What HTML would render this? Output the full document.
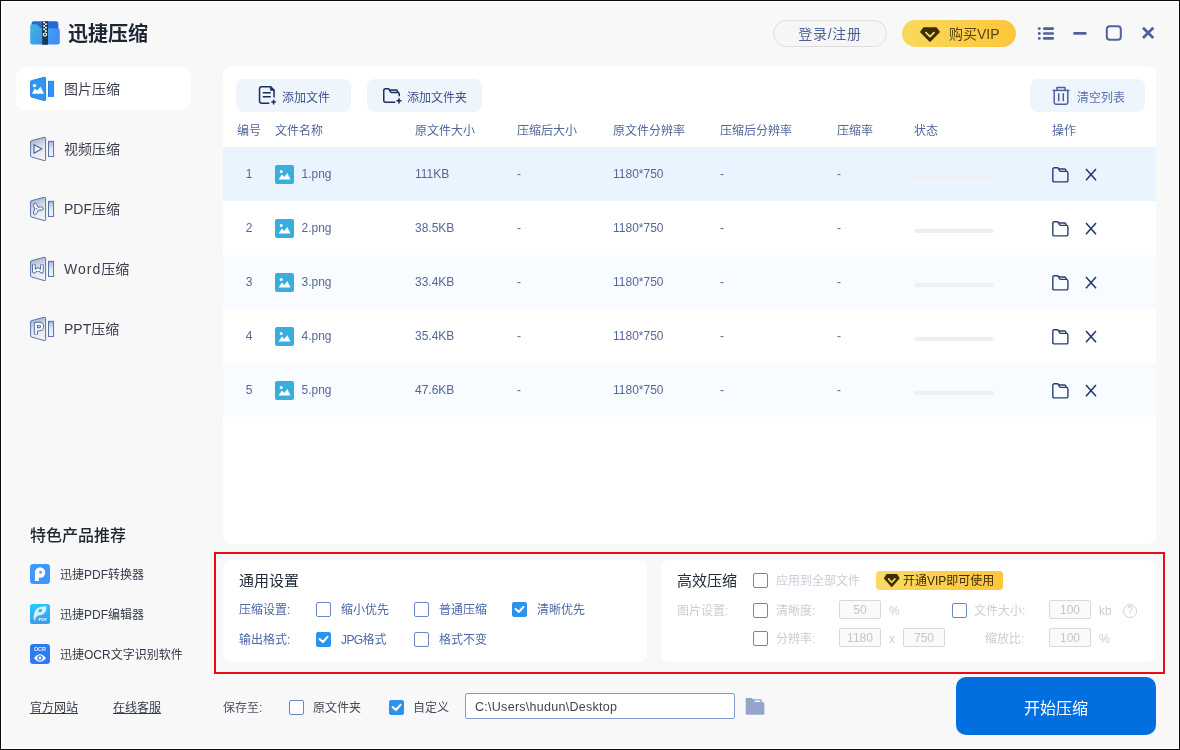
<!DOCTYPE html>
<html lang="zh-CN">
<head>
<meta charset="utf-8">
<title>迅捷压缩</title>
<style>
*{box-sizing:border-box;margin:0;padding:0}
html,body{width:1180px;height:750px;overflow:hidden}
body{position:relative;background:#f8f8f8;font-family:"Liberation Sans","Noto Sans CJK SC",sans-serif;color:#4a5a8c;font-size:12px}
#app{position:absolute;left:0;top:0;width:1180px;height:750px;will-change:transform}
.abs{position:absolute}
.t{position:absolute;white-space:nowrap;line-height:1}
#frame{position:absolute;left:0;top:0;width:1180px;height:750px;border:1px solid #0a0a0a;box-shadow:inset 0 0 0 1px #fff;pointer-events:none;z-index:50}
/* title */
#title{left:68px;top:24px;font-size:20px;font-weight:bold;color:#1d2433;letter-spacing:0}
/* sidebar */
.side-active{left:16px;top:67px;width:175px;height:43px;background:#fff;border-radius:9px}
.side-t{left:64px;font-size:14px;color:#3a3f4d}
/* main panel */
#panel{left:223px;top:66px;width:933px;height:478px;background:#fff;border-radius:8px}
.btn{position:absolute;height:33px;background:#eef5fd;border-radius:8px}
.btn .t{font-size:12px;color:#3d4f86}
.th{font-size:12px;color:#54679b;top:125px}
.row{position:absolute;left:223px;width:933px;height:54px}
.td{font-size:12px;color:#566898}
.bar{position:absolute;left:914px;width:80px;height:4px;border-radius:2px;background:#efefef}
/* settings */
#red{left:214px;top:552px;width:951px;height:122px;border:2px solid #e50c18}
.card{position:absolute;background:#fff;border-radius:8px}
.cb{position:absolute;width:15px;height:15px;border:1px solid #6b86c4;border-radius:2px;background:#fff}
.cb.on{background:#2c93ec;border-color:#2c93ec}
.lab{font-size:12px;color:#4c66a8}
.dis{font-size:12px;color:#c9cdd6}
.inp{position:absolute;height:19px;border:1px solid #d8d9dd;border-radius:2px;background:#fafafa;color:#c3c6cd;font-size:12px;text-align:center;line-height:18px}
.prod{font-size:12px;color:#333a48}
.link{font-size:12px;color:#333a48;text-decoration:underline}
</style>
</head>
<body>
<div id="app">
<!-- title bar -->
<!-- logo -->
<svg class="abs" style="left:30px;top:21px" width="30" height="24" viewBox="0 0 30 24">
  <defs>
    <linearGradient id="lgL" x1="0" y1="0" x2="1" y2="1"><stop offset="0" stop-color="#3cb9dc"/><stop offset="1" stop-color="#3f8ff0"/></linearGradient>
    <linearGradient id="lgR" x1="0" y1="0" x2="1" y2="1"><stop offset="0" stop-color="#3fa4ec"/><stop offset="1" stop-color="#4583fb"/></linearGradient>
  </defs>
  <path d="M1.5,3 Q1.5,0.3 4,0.3 H26 Q28.4,0.3 28.4,3 V12 H1.5 Z" fill="#2967d4"/>
  <path d="M0.2,5 Q0.2,3.2 2,3.2 H6 Q7,3.2 7.8,4 L10,6.4 Q10.8,7.2 12,7.2 H12.2 V23.6 H2.6 Q0.2,23.6 0.2,21.2 Z" fill="url(#lgL)"/>
  <path d="M17.8,7.2 H27.6 Q29.8,7.2 29.8,9.4 V21.2 Q29.8,23.6 27.4,23.6 H17.8 Z" fill="url(#lgR)"/>
  <rect x="12.1" y="0.3" width="5.9" height="23.5" fill="#173a4e"/>
  <g fill="#fff">
    <rect x="13.2" y="0.6" width="1.8" height="1.7"/><rect x="15" y="2.3" width="1.8" height="1.7"/>
    <rect x="13.2" y="4" width="1.8" height="1.7"/><rect x="15" y="5.7" width="1.8" height="1.7"/>
    <rect x="13.2" y="7.4" width="1.8" height="1.7"/><rect x="15" y="9.1" width="1.8" height="1.7"/>
  </g>
  <circle cx="15" cy="13.6" r="1.6" fill="none" stroke="#fff" stroke-width="1.1"/>
</svg>
<div class="t" id="title">迅捷压缩</div>

<!-- login / vip -->
<div class="abs" style="left:773px;top:20px;width:114px;height:27px;border:1px solid #dcdde0;border-radius:14px;background:#f6f6f7"></div>
<div class="t" style="left:773px;width:114px;text-align:center;top:27px;font-size:14px;letter-spacing:0.7px;color:#4f6096">登录/注册</div>
<div class="abs" style="left:902px;top:20px;width:114px;height:27px;border-radius:14px;background:linear-gradient(100deg,#f8d95e 0%,#fdc53a 100%)"></div>
<svg class="abs" style="left:919px;top:26px" width="22" height="17" viewBox="0 0 22 17">
  <path d="M5,1.2 H17 Q17.6,1.2 18,1.7 L20.7,5.6 Q21,6.1 20.6,6.6 L11.7,15.6 Q11,16.2 10.3,15.6 L1.4,6.6 Q1,6.1 1.3,5.6 L4,1.7 Q4.4,1.2 5,1.2 Z" fill="#3d2c08"/>
  <path d="M7,6.6 L11,10.6 L15,6.6" fill="none" stroke="#f9d256" stroke-width="1.9" stroke-linecap="round" stroke-linejoin="round"/>
</svg>
<div class="t" style="left:949px;top:27px;font-size:14px;color:#5a4310">购买VIP</div>

<!-- window controls -->
<svg class="abs" style="left:1034px;top:22px" width="126" height="22" viewBox="0 0 126 22" fill="none" stroke="#4d6399" stroke-linecap="round">
  <g stroke-width="2.6">
    <line x1="10.2" y1="6.6" x2="18.8" y2="6.6"/><line x1="10.2" y1="11.5" x2="18.8" y2="11.5"/><line x1="10.2" y1="16.4" x2="18.8" y2="16.4"/>
    <line x1="40.4" y1="11.4" x2="51.4" y2="11.4"/>
  </g>
  <g fill="#4d6399" stroke="none"><circle cx="5.3" cy="6.6" r="1.45"/><circle cx="5.3" cy="11.5" r="1.45"/><circle cx="5.3" cy="16.4" r="1.45"/></g>
  <rect x="72.8" y="4.2" width="14" height="13.6" rx="3" stroke-width="2"/>
  <g stroke-width="2.8" stroke-linecap="butt"><line x1="109" y1="5.7" x2="119.3" y2="16"/><line x1="119.3" y1="5.7" x2="109" y2="16"/></g>
</svg>

<!-- sidebar -->
<div class="abs side-active"></div>
<svg width="0" height="0" style="position:absolute">
  <defs>
    <linearGradient id="gTrap" x1="0" y1="0" x2="0.25" y2="1"><stop offset="0" stop-color="#94a6c8"/><stop offset="0.55" stop-color="#dfe3ec"/><stop offset="1" stop-color="#f1f2f6"/></linearGradient>
    <linearGradient id="gBar" x1="0" y1="0" x2="0" y2="1"><stop offset="0" stop-color="#a4b3d0"/><stop offset="0.5" stop-color="#e3e7ef"/><stop offset="1" stop-color="#f3f4f7"/></linearGradient>
    <g id="sideBase">
      <path d="M10.6,11.6 Q10.6,10.9 11.3,10.7 L24.2,7.3 Q25.6,7 25.6,8.4 V29.6 Q25.6,31 24.2,30.6 L11.3,26.9 Q10.6,26.7 10.6,26 Z" fill="url(#gTrap)" stroke="#4a66a0" stroke-width="0.9" stroke-linejoin="round"/>
      <rect x="28.5" y="11.3" width="5.1" height="15.1" fill="url(#gBar)" stroke="#4a66a0" stroke-width="0.9"/>
    </g>
  </defs>
</svg>
<!-- image (active) -->
<svg class="abs" style="left:20px;top:70px" width="50" height="40" viewBox="0 0 50 40">
  <path d="M10.6,11.6 Q10.6,10.9 11.3,10.7 L24.2,7.3 Q25.6,7 25.6,8.4 V29.6 Q25.6,31 24.2,30.6 L11.3,26.9 Q10.6,26.7 10.6,26 Z" fill="#2f96f0" stroke="#1f78e4" stroke-width="0.9" stroke-linejoin="round"/>
  <rect x="28.5" y="11.3" width="5.1" height="15.1" fill="#2f96f0" stroke="#1f78e4" stroke-width="0.9"/>
  <circle cx="14.5" cy="15.6" r="1.7" fill="#fff"/>
  <path d="M12,23.8 L14.8,18.6 L17.1,20.6 L20.5,16.7 L24,23.8 Z" fill="#fff"/>
</svg>
<!-- video -->
<svg class="abs" style="left:20px;top:130px" width="50" height="40" viewBox="0 0 50 40">
  <use href="#sideBase"/>
  <path d="M14,14.7 L21.9,18.8 L14,23.2 Z" fill="#f3f5f9" stroke="#4a66a0" stroke-width="1.2" stroke-linejoin="round"/>
</svg>
<!-- pdf -->
<svg class="abs" style="left:20px;top:190px" width="50" height="40" viewBox="0 0 50 40">
  <use href="#sideBase"/>
  <path d="M13.5,14.6 Q13.5,13 15.2,13.2 Q17,13.8 18.2,17.2 Q20.6,16.6 22.4,17.2 Q23.9,17.9 23.3,19.3 Q22.6,20.4 18.3,20.2 Q17.4,22.9 15.7,24.4 Q14.2,25.3 13.5,24 Q13.1,22.4 14.7,18.8 Q13.5,16.2 13.5,14.6 Z" fill="#f1f3f8" stroke="#4a66a0" stroke-width="1" stroke-linejoin="round"/>
  <circle cx="16.4" cy="18.7" r="0.7" fill="#4a66a0"/>
</svg>
<!-- word -->
<svg class="abs" style="left:20px;top:250px" width="50" height="40" viewBox="0 0 50 40">
  <use href="#sideBase"/>
  <g fill="none" stroke-linejoin="round" stroke-linecap="butt">
    <path d="M13.9,14.4 V21.8 L17.9,19 L21.9,21.8 V14.4" stroke="#4a66a0" stroke-width="3.6"/>
    <path d="M13.9,14.9 V21.8 L17.9,19 L21.9,21.8 V14.9" stroke="#f6f8fb" stroke-width="1.8"/>
  </g>
</svg>
<!-- ppt -->
<svg class="abs" style="left:20px;top:310px" width="50" height="40" viewBox="0 0 50 40">
  <use href="#sideBase"/>
  <g fill="none" stroke-linejoin="round" stroke-linecap="butt">
    <path d="M15.9,24.4 V13.8 H19.4 A2.75,2.75 0 0 1 19.4,19.3 H15.9" stroke="#4a66a0" stroke-width="4"/>
    <path d="M15.9,23.9 V13.8 H19.4 A2.75,2.75 0 0 1 19.4,19.3 H15.9" stroke="#f6f8fb" stroke-width="2.2"/>
  </g>
</svg>
<div class="t side-t" style="top:82px">图片压缩</div>
<div class="t side-t" style="top:142px">视频压缩</div>
<div class="t side-t" style="top:202px">PDF压缩</div>
<div class="t side-t" style="top:262px"><span style="letter-spacing:1px">Word</span>压缩</div>
<div class="t side-t" style="top:322px">PPT压缩</div>

<!-- main panel -->
<div class="abs" id="panel"></div>
<svg width="0" height="0" style="position:absolute"><defs>
  <g id="icoFile">
    <rect x="0" y="0" width="19" height="19" rx="2" fill="#39addc"/>
    <circle cx="6.2" cy="6.6" r="1.5" fill="#fff"/>
    <path d="M3.6,14.6 L6.9,9.6 L9.3,12.1 L12.3,7.9 L15.5,14.6 Z" fill="#fff"/>
  </g>
  <g id="icoOpen" fill="none" stroke="#2b3e70" stroke-width="1.4" stroke-linejoin="round" stroke-linecap="round">
    <path d="M0.8,2.3 Q0.8,0.8 2.3,0.8 H5.3 Q6.1,0.8 6.5,1.6 L7.4,3.5 Q7.8,4.4 8.9,4.4 H14.4 Q15.9,4.4 15.9,5.9 V13.4 Q15.9,14.9 14.4,14.9 H2.3 Q0.8,14.9 0.8,13.4 Z"/>
    <path d="M6.9,2 H12.6 Q13.6,2 13.9,3 L14.3,4.3"/>
  </g>
  <g id="icoX" fill="none" stroke="#22366a" stroke-width="1.5" stroke-linecap="butt">
    <path d="M1,0.9 L11,12.2 M11,0.9 L1,12.2"/>
  </g>
</defs></svg>

<!-- toolbar -->
<div class="btn" style="left:236px;top:79px;width:115px"></div>
<svg class="abs" style="left:258px;top:85px" width="20" height="21" viewBox="0 0 20 21" fill="none" stroke="#1c2f5e" stroke-width="1.5" stroke-linecap="round" stroke-linejoin="round">
  <path d="M10.8,18.15 H3.6 Q1.55,18.15 1.55,16.1 V3.7 Q1.55,1.65 3.6,1.65 H12.4 L16.05,5.3 V12.1"/>
  <path d="M12.4,1.65 V5.3 H16.05 Z" fill="#1c2f5e" stroke-width="0.8"/>
  <path d="M5.3,7.7 H12.3 M5.3,11.7 H12.3" stroke-width="1.4"/>
  <path d="M13.3,17.1 H17.9 M15.6,14.8 V19.4" stroke-width="1.5" stroke-linecap="butt"/>
</svg>
<div class="t" style="left:282px;top:92px;font-size:12px;color:#3f5288">添加文件</div>

<div class="btn" style="left:367px;top:79px;width:115px"></div>
<svg class="abs" style="left:382px;top:86px" width="21" height="19" viewBox="0 0 21 19" fill="none" stroke="#1c2f5e" stroke-width="1.5" stroke-linecap="round" stroke-linejoin="round">
  <path d="M12.6,16.25 H3.7 Q1.75,16.25 1.75,14.3 V4.7 Q1.75,2.75 3.7,2.75 H6 Q6.9,2.75 7.3,3.6 L8.2,5.5 Q8.6,6.4 9.6,6.4 H15.6 Q17.25,6.4 17.25,8 V9.8"/>
  <path d="M7.8,3.9 H14 Q15,3.9 15.4,4.9 L15.9,6.3" fill="#9aa6c2" fill-opacity="0.6"/>
  <path d="M14.4,14.8 H19.6 M17,12.2 V17.4" stroke-width="1.6" stroke-linecap="butt"/>
</svg>
<div class="t" style="left:407px;top:92px;font-size:12px;color:#3f5288">添加文件夹</div>

<div class="btn" style="left:1030px;top:79px;width:115px"></div>
<svg class="abs" style="left:1051px;top:85px" width="20" height="21" viewBox="0 0 20 21" fill="none" stroke="#4d6297" stroke-width="1.5" stroke-linecap="butt" stroke-linejoin="round">
  <path d="M1.6,5.4 H18.4"/>
  <path d="M6,5 V2.6 H14 V5"/>
  <path d="M3.2,5.4 V17.6 Q3.2,19.3 4.9,19.3 H15.1 Q16.8,19.3 16.8,17.6 V5.4"/>
  <path d="M7.7,8.2 V16.2 M12.3,8.2 V16.2"/>
</svg>
<div class="t" style="left:1077px;top:92px;font-size:12px;color:#5770a8">清空列表</div>

<!-- header -->
<div class="t th" style="left:237px">编号</div>
<div class="t th" style="left:275px">文件名称</div>
<div class="t th" style="left:415px">原文件大小</div>
<div class="t th" style="left:517px">压缩后大小</div>
<div class="t th" style="left:613px">原文件分辨率</div>
<div class="t th" style="left:720px">压缩后分辨率</div>
<div class="t th" style="left:837px">压缩率</div>
<div class="t th" style="left:914px">状态</div>
<div class="t th" style="left:1052px">操作</div>

<!-- rows -->
<div class="row" style="top:147px;background:#eaf4ff"></div>
<div class="t td" style="left:237px;width:24px;text-align:center;top:168px">1</div>
<svg class="abs" style="left:275px;top:165px" width="19" height="19" viewBox="0 0 19 19"><use href="#icoFile"/></svg>
<div class="t td" style="left:301.5px;top:168px">1.png</div>
<div class="t td" style="left:415px;top:168px">111KB</div>
<div class="t td" style="left:517px;top:168px">-</div>
<div class="t td" style="left:613px;top:168px">1180*750</div>
<div class="t td" style="left:720px;top:168px">-</div>
<div class="t td" style="left:837px;top:168px">-</div>
<div class="bar" style="top:175px"></div>
<svg class="abs" style="left:1052px;top:167px" width="17" height="16" viewBox="0 0 17 16"><use href="#icoOpen"/></svg>
<svg class="abs" style="left:1085px;top:168px" width="12" height="13" viewBox="0 0 12 13"><use href="#icoX"/></svg>
<div class="row" style="top:201px;background:#ffffff"></div>
<div class="t td" style="left:237px;width:24px;text-align:center;top:222px">2</div>
<svg class="abs" style="left:275px;top:219px" width="19" height="19" viewBox="0 0 19 19"><use href="#icoFile"/></svg>
<div class="t td" style="left:301.5px;top:222px">2.png</div>
<div class="t td" style="left:415px;top:222px">38.5KB</div>
<div class="t td" style="left:517px;top:222px">-</div>
<div class="t td" style="left:613px;top:222px">1180*750</div>
<div class="t td" style="left:720px;top:222px">-</div>
<div class="t td" style="left:837px;top:222px">-</div>
<div class="bar" style="top:229px"></div>
<svg class="abs" style="left:1052px;top:221px" width="17" height="16" viewBox="0 0 17 16"><use href="#icoOpen"/></svg>
<svg class="abs" style="left:1085px;top:222px" width="12" height="13" viewBox="0 0 12 13"><use href="#icoX"/></svg>
<div class="row" style="top:255px;background:#f8fbff"></div>
<div class="t td" style="left:237px;width:24px;text-align:center;top:276px">3</div>
<svg class="abs" style="left:275px;top:273px" width="19" height="19" viewBox="0 0 19 19"><use href="#icoFile"/></svg>
<div class="t td" style="left:301.5px;top:276px">3.png</div>
<div class="t td" style="left:415px;top:276px">33.4KB</div>
<div class="t td" style="left:517px;top:276px">-</div>
<div class="t td" style="left:613px;top:276px">1180*750</div>
<div class="t td" style="left:720px;top:276px">-</div>
<div class="t td" style="left:837px;top:276px">-</div>
<div class="bar" style="top:283px"></div>
<svg class="abs" style="left:1052px;top:275px" width="17" height="16" viewBox="0 0 17 16"><use href="#icoOpen"/></svg>
<svg class="abs" style="left:1085px;top:276px" width="12" height="13" viewBox="0 0 12 13"><use href="#icoX"/></svg>
<div class="row" style="top:309px;background:#ffffff"></div>
<div class="t td" style="left:237px;width:24px;text-align:center;top:330px">4</div>
<svg class="abs" style="left:275px;top:327px" width="19" height="19" viewBox="0 0 19 19"><use href="#icoFile"/></svg>
<div class="t td" style="left:301.5px;top:330px">4.png</div>
<div class="t td" style="left:415px;top:330px">35.4KB</div>
<div class="t td" style="left:517px;top:330px">-</div>
<div class="t td" style="left:613px;top:330px">1180*750</div>
<div class="t td" style="left:720px;top:330px">-</div>
<div class="t td" style="left:837px;top:330px">-</div>
<div class="bar" style="top:337px"></div>
<svg class="abs" style="left:1052px;top:329px" width="17" height="16" viewBox="0 0 17 16"><use href="#icoOpen"/></svg>
<svg class="abs" style="left:1085px;top:330px" width="12" height="13" viewBox="0 0 12 13"><use href="#icoX"/></svg>
<div class="row" style="top:363px;background:#f8fbff"></div>
<div class="t td" style="left:237px;width:24px;text-align:center;top:384px">5</div>
<svg class="abs" style="left:275px;top:381px" width="19" height="19" viewBox="0 0 19 19"><use href="#icoFile"/></svg>
<div class="t td" style="left:301.5px;top:384px">5.png</div>
<div class="t td" style="left:415px;top:384px">47.6KB</div>
<div class="t td" style="left:517px;top:384px">-</div>
<div class="t td" style="left:613px;top:384px">1180*750</div>
<div class="t td" style="left:720px;top:384px">-</div>
<div class="t td" style="left:837px;top:384px">-</div>
<div class="bar" style="top:391px"></div>
<svg class="abs" style="left:1052px;top:383px" width="17" height="16" viewBox="0 0 17 16"><use href="#icoOpen"/></svg>
<svg class="abs" style="left:1085px;top:384px" width="12" height="13" viewBox="0 0 12 13"><use href="#icoX"/></svg>

<!-- settings -->
<div class="abs" id="red"></div>
<div class="card" style="left:223px;top:560px;width:424px;height:102px"></div>
<div class="card" style="left:661px;top:560px;width:495px;height:102px"></div>

<div class="t" style="left:239px;top:573px;font-size:15px;color:#232b3b">通用设置</div>
<div class="t lab" style="left:239px;top:604px">压缩设置:</div>
<div class="t lab" style="left:239px;top:634px">输出格式:</div>
<div class="cb" style="left:316px;top:602px"></div>
<div class="t lab" style="left:341px;top:604px">缩小优先</div>
<div class="cb" style="left:414px;top:602px"></div>
<div class="t lab" style="left:439px;top:604px">普通压缩</div>
<div class="cb on" style="left:512px;top:602px"><svg width="13" height="13" viewBox="0 0 13 13" style="position:absolute;left:0;top:0"><path d="M2.6,6 L5.9,9 L10.5,3.8" fill="none" stroke="#fff" stroke-width="2" stroke-linecap="round" stroke-linejoin="round"/></svg></div>
<div class="t lab" style="left:537px;top:604px">清晰优先</div>
<div class="cb on" style="left:316px;top:632px"><svg width="13" height="13" viewBox="0 0 13 13" style="position:absolute;left:0;top:0"><path d="M2.6,6 L5.9,9 L10.5,3.8" fill="none" stroke="#fff" stroke-width="2" stroke-linecap="round" stroke-linejoin="round"/></svg></div>
<div class="t lab" style="left:341px;top:634px"><span style="letter-spacing:-0.6px">JPG</span>格式</div>
<div class="cb" style="left:414px;top:632px"></div>
<div class="t lab" style="left:439px;top:634px">格式不变</div>

<div class="t" style="left:677px;top:573px;font-size:15px;color:#232b3b">高效压缩</div>
<div class="cb" style="left:753px;top:573px"></div>
<div class="t dis" style="left:776px;top:575px">应用到全部文件</div>
<div class="abs" style="left:876px;top:571px;width:127px;height:19px;border-radius:4px;background:linear-gradient(90deg,#f9da64 0%,#fdc53c 100%)"></div>
<svg class="abs" style="left:883px;top:573px" width="17.5" height="15" viewBox="0 0 22 17" preserveAspectRatio="none">
  <path d="M5,1.2 H17 Q17.6,1.2 18,1.7 L20.7,5.6 Q21,6.1 20.6,6.6 L11.7,15.6 Q11,16.2 10.3,15.6 L1.4,6.6 Q1,6.1 1.3,5.6 L4,1.7 Q4.4,1.2 5,1.2 Z" fill="#3d2c08"/>
  <path d="M7,6.6 L11,10.6 L15,6.6" fill="none" stroke="#f9d256" stroke-width="2" stroke-linecap="round" stroke-linejoin="round"/>
</svg>
<div class="t" style="left:903px;top:575px;font-size:12px;color:#3a2c0c">开通VIP即可使用</div>

<div class="t dis" style="left:677px;top:605px">图片设置:</div>
<div class="cb" style="left:753px;top:603px"></div>
<div class="t dis" style="left:776px;top:605px">清晰度:</div>
<div class="inp" style="left:839px;top:600px;width:42px">50</div><div class="t dis" style="left:889px;top:605px">%</div>
<div class="cb" style="left:952px;top:603px"></div>
<div class="t dis" style="left:974px;top:605px">文件大小:</div>
<div class="inp" style="left:1049px;top:600px;width:42px">100</div><div class="t dis" style="left:1099px;top:605px">kb</div>
<div class="abs" style="left:1123px;top:603.5px;width:14px;height:14px;border:1px solid #cfd2d9;border-radius:50%"></div><div class="t" style="left:1123px;width:14px;text-align:center;top:605.5px;font-size:10px;color:#c5c9d2">?</div>
<div class="cb" style="left:753px;top:631px"></div>
<div class="t dis" style="left:776px;top:633px">分辨率:</div>
<div class="inp" style="left:839px;top:628px;width:42px">1180</div><div class="t dis" style="left:889px;top:633px">x</div>
<div class="inp" style="left:903px;top:628px;width:42px">750</div>
<div class="t dis" style="left:985px;top:633px">缩放比:</div>
<div class="inp" style="left:1049px;top:628px;width:42px">100</div><div class="t dis" style="left:1099px;top:633px">%</div>

<!-- bottom -->
<div class="t" style="left:30px;top:528px;font-size:16px;font-weight:500;color:#1f2633">特色产品推荐</div>
<svg class="abs" style="left:30px;top:564px" width="20" height="20" viewBox="0 0 20 20">
  <defs><linearGradient id="gp1" x1="0" y1="0" x2="1" y2="1"><stop offset="0" stop-color="#3e9cff"/><stop offset="1" stop-color="#3a96fc"/></linearGradient></defs>
  <rect width="20" height="20" rx="3.2" fill="url(#gp1)"/>
  <circle cx="10.1" cy="8.5" r="5.2" fill="#fff"/>
  <path d="M4.9,8.5 H8.9 V16.4 Q8.9,17 8.3,17 H5.5 Q4.9,17 4.9,16.4 Z" fill="#fff"/>
  <circle cx="10.5" cy="8.3" r="1.35" fill="#3d9bff"/>
</svg>
<div class="t prod" style="left:60px;top:569px">迅捷PDF转换器</div>
<svg class="abs" style="left:30px;top:604px" width="20" height="20" viewBox="0 0 20 20">
  <defs><linearGradient id="gp2" x1="0" y1="0" x2="0.2" y2="1"><stop offset="0" stop-color="#24ccfe"/><stop offset="1" stop-color="#3a9df4"/></linearGradient></defs>
  <rect width="20" height="20" rx="2.6" fill="url(#gp2)"/>
  <path d="M4.3,17.3 Q2.6,11.4 5.4,6.4 Q8,2.2 16.2,2.2 Q17,6.4 14,9.6 Q11.6,11.8 8,11.6 Q6.2,13 5.6,14.2 Z" fill="#fff" fill-opacity="0.82"/>
  <ellipse cx="10.2" cy="6.6" rx="2.1" ry="1.5" transform="rotate(-25 10.2 6.6)" fill="#2fb4ee"/>
  <text x="12.9" y="16.7" font-family="Liberation Sans, sans-serif" font-size="4.4" font-weight="bold" fill="#fff" fill-opacity="0.92" text-anchor="middle">PDF</text>
</svg>
<div class="t prod" style="left:60px;top:609px">迅捷PDF编辑器</div>
<svg class="abs" style="left:30px;top:644px" width="20" height="20" viewBox="0 0 20 20">
  <rect width="20" height="20" rx="3.2" fill="#2b7cf0"/>
  <text x="9.9" y="6.9" font-family="Liberation Sans, sans-serif" font-size="5.2" font-weight="bold" fill="#eaf2ff" text-anchor="middle" textLength="12" lengthAdjust="spacingAndGlyphs">OCR</text>
  <path d="M4,14 Q10,6.4 16,14 Q10,21.6 4,14 Z" fill="#fff"/>
  <circle cx="10" cy="13.9" r="2.7" fill="#3f88f2"/>
  <circle cx="10" cy="13.9" r="1.3" fill="#fff"/>
</svg>
<div class="t prod" style="left:60px;top:649px">迅捷OCR文字识别软件</div>

<div class="t link" style="left:30px;top:702px">官方网站</div>
<div class="t link" style="left:113px;top:702px">在线客服</div>

<div class="t" style="left:223px;top:701.6px;font-size:12px;color:#4e5563">保存至:</div>
<div class="cb" style="left:289px;top:699.5px"></div>
<div class="t" style="left:313px;top:701.6px;font-size:12px;color:#434a58">原文件夹</div>
<div class="cb on" style="left:389px;top:699.5px"><svg width="13" height="13" viewBox="0 0 13 13" style="position:absolute;left:0;top:0"><path d="M2.6,6 L5.9,9 L10.5,3.8" fill="none" stroke="#fff" stroke-width="2" stroke-linecap="round" stroke-linejoin="round"/></svg></div>
<div class="t" style="left:413px;top:701.6px;font-size:12px;color:#434a58">自定义</div>
<div class="abs" style="left:465px;top:693px;width:270px;height:26px;border:1px solid #7f9bd2;border-radius:2px;background:#fff"></div>
<div class="t" style="left:475px;top:701px;font-size:12.5px;letter-spacing:0.28px;color:#444">C:\Users\hudun\Desktop</div>
<svg class="abs" style="left:745px;top:697px" width="21" height="19" viewBox="0 0 21 19">
  <path d="M0.7,2.3 Q0.7,1.1 1.9,1.1 H7.3 L7.9,2.2 H15.9 Q16.9,2.2 16.9,3.2 V5.2 H18.4 Q19.4,5.2 19.4,6.2 V16.5 Q19.4,17.7 18.2,17.7 H1.9 Q0.7,17.7 0.7,16.5 Z" fill="#93a6c9"/>
  <rect x="9.6" y="3.4" width="6" height="1.5" rx="0.4" fill="#f4f6fa"/>
</svg>
<div class="abs" style="left:956px;top:677px;width:200px;height:58px;border-radius:10px;background:#026fe0"></div>
<div class="t" style="left:956px;width:200px;text-align:center;top:700.5px;font-size:16px;color:#fff">开始压缩</div>

<div id="frame"></div>
</div>
</body>
</html>
